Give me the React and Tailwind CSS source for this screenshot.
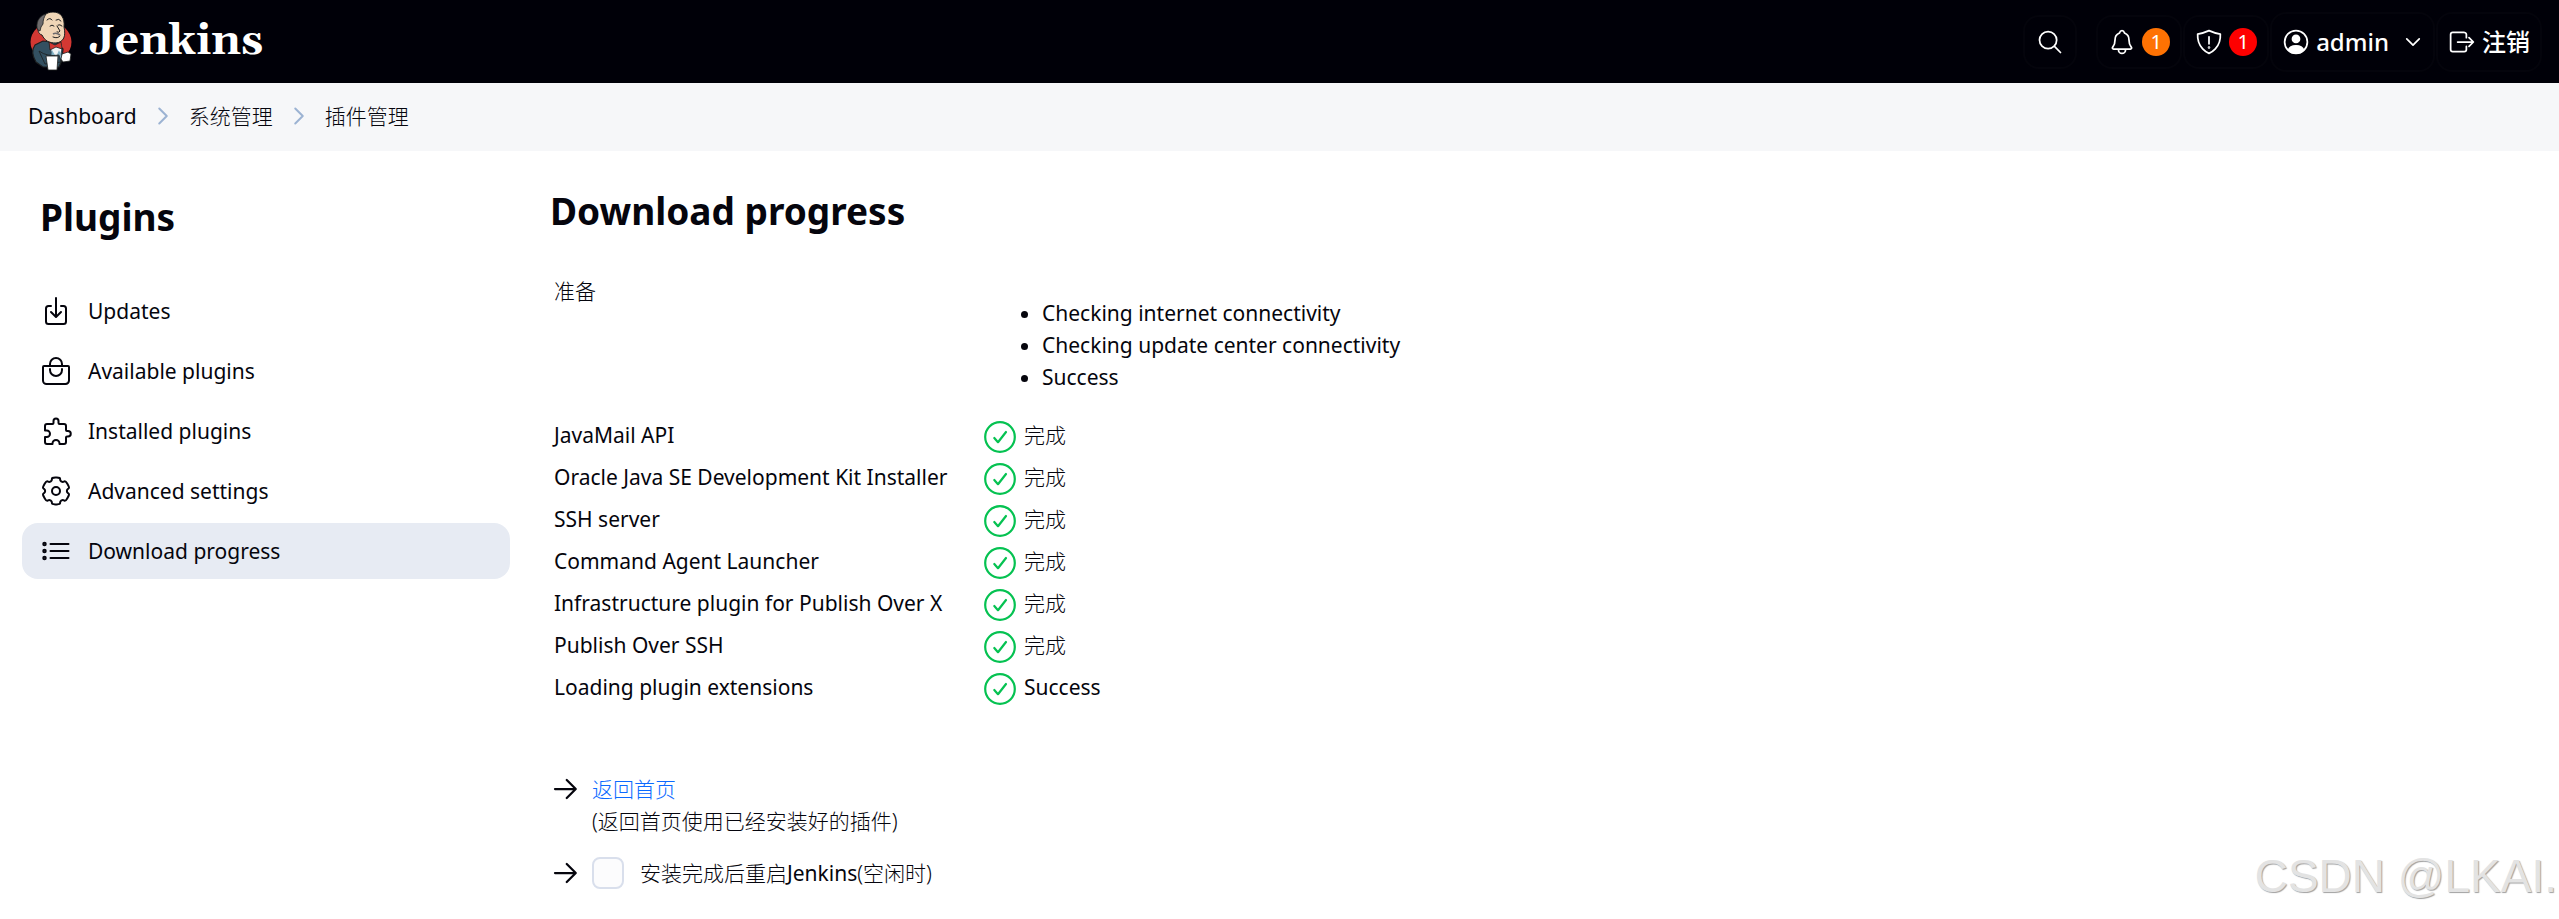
import React, { useState } from 'react';

const MENU = [
  { id: 'updates', label: 'Updates', icon: UpdatesIcon },
  { id: 'available', label: 'Available plugins', icon: BagIcon },
  { id: 'installed', label: 'Installed plugins', icon: PuzzleIcon },
  { id: 'advanced', label: 'Advanced settings', icon: GearIcon },
  { id: 'progress', label: 'Download progress', icon: ListIcon },
];

const JOBS = [
  { name: 'JavaMail API', status: '完成' },
  { name: 'Oracle Java SE Development Kit Installer', status: '完成' },
  { name: 'SSH server', status: '完成' },
  { name: 'Command Agent Launcher', status: '完成' },
  { name: 'Infrastructure plugin for Publish Over X', status: '完成' },
  { name: 'Publish Over SSH', status: '完成' },
  { name: 'Loading plugin extensions', status: 'Success' },
];

const CHECKS = ['Checking internet connectivity', 'Checking update center connectivity', 'Success'];

// Six rounded teeth: corner points joined by curves through their midpoints
function gearPath() {
  const points = [];
  for (let tooth = 0; tooth < 6; tooth++) {
    [[-17, 224], [17, 224], [22, 176], [38, 176]].forEach(([angle, radius]) => {
      const rad = ((tooth * 60 + angle - 90) * Math.PI) / 180;
      points.push([256 + radius * Math.cos(rad), 256 + radius * Math.sin(rad)]);
    });
  }
  const mid = (a, b, k) => `${(a[0] + (b[0] - a[0]) * k).toFixed(1)} ${(a[1] + (b[1] - a[1]) * k).toFixed(1)}`;
  return points
    .map((p, i) => {
      const prev = points[(i + points.length - 1) % points.length];
      const next = points[(i + 1) % points.length];
      return `${i === 0 ? 'M' : 'L'}${mid(p, prev, 0.4)}Q${p[0].toFixed(1)} ${p[1].toFixed(1)} ${mid(p, next, 0.4)}`;
    })
    .join('') + 'z';
}

const GEAR = gearPath();

// All line icons are drawn on the 512 ionicons grid
function Icon({ className = 'size-8', width = 32, children }) {
  return (
    <svg
      viewBox="0 0 512 512"
      className={`shrink-0 ${className}`}
      fill="none"
      stroke="currentColor"
      strokeWidth={width}
      strokeLinecap="round"
      strokeLinejoin="round"
      aria-hidden="true"
    >
      {children}
    </svg>
  );
}

function UpdatesIcon() {
  return (
    <Icon>
      <path d="M336 176h40a40 40 0 0140 40v208a40 40 0 01-40 40H136a40 40 0 01-40-40V216a40 40 0 0140-40h40" />
      <path d="M176 272l80 80 80-80M256 48v288" />
    </Icon>
  );
}

function BagIcon() {
  return (
    <Icon>
      <path d="M64 176a16 16 0 00-16 16v216c0 30.24 25.76 56 56 56h304c30.24 0 56-24.51 56-54.75V192a16 16 0 00-16-16zM160 176v-32a96 96 0 0196-96h0a96 96 0 0196 96v32" />
      <path d="M160 224v16a96 96 0 0096 96h0a96 96 0 0096-96v-16" />
    </Icon>
  );
}

function PuzzleIcon() {
  return (
    <Icon>
      <path d="M112 144h88a16 16 0 0016-16V96a40 40 0 0180 0v32a16 16 0 0016 16h72a32 32 0 0132 32v64a16 16 0 0016 16h16a44 44 0 010 88h-16a16 16 0 00-16 16v72a32 32 0 01-32 32h-72v-8a56 56 0 00-112 0v8h-88a32 32 0 01-32-32v-80h28a52 52 0 000-104H80v-72a32 32 0 0132-32z" />
    </Icon>
  );
}

function GearIcon() {
  return (
    <Icon>
      <path d={GEAR} />
      <circle cx="256" cy="256" r="64" />
    </Icon>
  );
}

function ListIcon() {
  return (
    <Icon>
      <path d="M168 144h288M168 256h288M168 368h288" />
      <circle cx="72" cy="144" r="20" />
      <circle cx="72" cy="256" r="20" />
      <circle cx="72" cy="368" r="20" />
    </Icon>
  );
}

function CheckIcon() {
  return (
    <svg viewBox="0 0 32 32" className="size-8 shrink-0" fill="none" stroke="#05c251" strokeLinecap="round" strokeLinejoin="round" aria-hidden="true">
      <circle cx="16" cy="16" r="14.8" strokeWidth="2.2" />
      <path d="M10.3 17l3.7 4.2 8-10.2" strokeWidth="2.2" />
    </svg>
  );
}

function ArrowIcon() {
  return (
    <Icon className="size-8" width={36}>
      <path d="M268 112l144 144-144 144M400 256H80" />
    </Icon>
  );
}

function Butler() {
  return (
    <svg viewBox="0 0 44 60" className="h-15 w-11 shrink-0" aria-hidden="true">
      <ellipse cx="22" cy="30" rx="20.5" ry="19" fill="#d33833" />
      <path d="M7 50Q1 40 6 33l8-4 14 2 6 6-1 11-3 7H14z" fill="#335061" stroke="#1d1f20" strokeWidth="1.2" />
      <path d="M21 33l12 0-2 12-6 3z" fill="#f0f4f5" />
      <path d="M23 38l4 7 3-7 3 7-5 5-6-5z" fill="#81b0c4" />
      <path d="M10 14C11 4 18 0 24 0c8 0 12 6 11 15 2 9 0 15-8 16-7 0-11-2-14-8-4-1-5-6-3-9z" fill="#f0d6b7" stroke="#1d1f20" strokeWidth="1" />
      <path d="M8 16C7 8 12 3 17 2c-2 3-3 6-3 10l-2 3-1 4-2-1z" fill="#6d6b6d" stroke="#1d1f20" strokeWidth=".8" />
      <path d="M18 8q3-3 5 0M27 8q3-2 5 1M21 14q2-2 4 0M29 13q2-1 4 1M28 14l3 5q-1 2-3 1M24 25q5 2 7-1" fill="none" stroke="#1d1f20" strokeWidth="1" strokeLinecap="round" />
      <path d="M24 22q3-2 7 1" fill="none" stroke="#6d6b6d" strokeWidth="1.6" />
      <path d="M20 30l6 3 6-3 1 7-6-2-6 3z" fill="#d33833" stroke="#1d1f20" strokeWidth=".8" />
      <path d="M10 39q8 6 20 4l2 7-16 2z" fill="#335061" stroke="#1d1f20" strokeWidth=".8" />
      <path d="M33 42l6-2 3 2-1 7-7 1-2-3z" fill="#fff" stroke="#1d1f20" strokeWidth=".8" />
      <path d="M17 44h12l-1 14H19z" fill="#fff" stroke="#1d1f20" strokeWidth=".8" />
    </svg>
  );
}

function Chevron() {
  return (
    <Icon className="size-5 text-[#9cb3d3]" width={52}>
      <path d="M160 64l192 192-192 192" />
    </Icon>
  );
}

function Header() {
  return (
    <header className="flex h-[83px] items-center justify-between bg-[#000008] pr-[17px] pl-[29px] text-white">
      <a href="#" className="flex items-center gap-4">
        <Butler />
        <span className="font-['Gelasio','DejaVu_Serif','Liberation_Serif',serif] text-[43px] leading-none font-bold">Jenkins</span>
      </a>
      <div className="flex items-center gap-px">
        <button type="button" aria-label="Search" className="mr-[18px] flex size-[54px] items-center justify-center rounded-2xl border-2 border-[#04040c]">
          <Icon className="size-7">
            <path d="M221 64a157 157 0 10157 157A157 157 0 00221 64zM338 338l110 110" />
          </Icon>
        </button>
        <a href="#" className="flex h-[54px] items-center gap-1.5 rounded-2xl border-2 border-[#04040c] px-2.5">
          <Icon className="size-7">
            <path d="M427.68 351.43C402 320 383.87 304 383.87 217.35 383.87 138 343.35 109.73 310 96c-4.43-1.82-8.6-6-9.95-10.55C294.2 65.54 277.8 48 256 48s-38.21 17.55-44 37.47c-1.35 4.6-5.52 8.71-9.95 10.53-33.39 13.75-73.87 41.92-73.87 121.35C128.13 304 110 320 84.32 351.43 73.68 364.45 83 384 101.61 384h308.88c18.51 0 27.77-19.61 17.19-32.57zM320 384v16a64 64 0 01-128 0v-16" />
          </Icon>
          <span className="flex size-7 items-center justify-center rounded-full bg-[#fe7203] text-xl">1</span>
        </a>
        <a href="#" className="flex h-[54px] items-center gap-1.5 rounded-2xl border-2 border-[#04040c] px-2.5">
          <Icon className="size-7">
            <path d="M463.1 112.37C373.68 96.33 336.71 84.45 256 48c-80.71 36.45-117.68 48.33-207.1 64.37C32.7 369.13 240.58 457.79 256 464c15.42-6.21 223.3-94.87 207.1-351.63zM256 160v130" />
            <circle cx="256" cy="356" r="8" />
          </Icon>
          <span className="flex size-7 items-center justify-center rounded-full bg-[#fe0000] text-xl">1</span>
        </a>
        <a href="#" className="flex h-[60px] items-center gap-1.5 rounded-2xl border-2 border-[#04040c] px-2.5 text-2xl font-medium">
          <Icon className="size-7">
            <circle cx="256" cy="256" r="208" />
            <circle cx="256" cy="200" r="64" fill="currentColor" stroke="currentColor" />
            <path d="M120 400c30-100 242-100 272 0-70 80-202 80-272 0z" fill="currentColor" />
          </Icon>
          admin
          <Icon className="ml-2 size-5" width={44}>
            <path d="M96 176l160 160 160-160" />
          </Icon>
        </a>
        <a href="#" className="flex h-[60px] items-center gap-1.5 rounded-2xl border-2 border-[#04040c] px-2.5 text-2xl font-medium">
          <Icon className="size-7">
            <path d="M336 336v56a40 40 0 01-40 40H88a40 40 0 01-40-40V120a40 40 0 0140-40h200c22.09 0 48 17.91 48 40v56M384 336l80-80-80-80M176 256h272" />
          </Icon>
          注销
        </a>
      </div>
    </header>
  );
}

function Breadcrumbs() {
  return (
    <nav className="flex h-[68px] items-center gap-4 bg-[#f6f7f9] px-7 pb-0.5" aria-label="Breadcrumb">
      <a href="#">Dashboard</a>
      <Chevron />
      <a href="#" className="font-light">系统管理</a>
      <Chevron />
      <a href="#" className="font-light">插件管理</a>
    </nav>
  );
}

function Sidebar() {
  return (
    <aside className="w-[488px] shrink-0">
      <h1 className="mb-[46px] px-[18px] pt-[46px] text-[37px] leading-10 font-bold">Plugins</h1>
      <nav className="flex flex-col gap-1">
        {MENU.map(({ id, label, icon: ItemIcon }) => (
          <a
            key={id}
            href={`#${id}`}
            className={`flex h-14 items-center gap-4 rounded-2xl px-[18px] ${id === 'progress' ? 'bg-[#e7ebf3]' : ''}`}
          >
            <ItemIcon />
            {label}
          </a>
        ))}
      </nav>
    </aside>
  );
}

function ProgressTable() {
  return (
    <table>
      <tbody>
        <tr className="align-top">
          <td className="w-[430px] py-1 font-light">准备</td>
          <td className="pt-[26px] pb-6">
            <ul className="list-disc pl-[58px]">
              {CHECKS.map((line) => (
                <li key={line}>{line}</li>
              ))}
            </ul>
          </td>
        </tr>
        {JOBS.map((job) => (
          <tr key={job.name} className="h-[42px] align-top">
            <td className="py-0.5">{job.name}</td>
            <td>
              <div className="flex items-center gap-2 pt-0.5">
                <CheckIcon />
                <span className={`pb-1 ${job.status === 'Success' ? '' : 'font-light'}`}>{job.status}</span>
              </div>
            </td>
          </tr>
        ))}
      </tbody>
    </table>
  );
}

export default function App() {
  const [restart, setRestart] = useState(false);

  return (
    <div className="relative min-h-screen overflow-hidden bg-white font-['Noto_Sans','Noto_Sans_CJK_SC',sans-serif] text-[21px] leading-8 text-[#05050d]">
      <Header />
      <Breadcrumbs />
      <div className="flex gap-10 px-[22px]">
        <Sidebar />
        <main className="min-w-0 grow pt-10">
          <h1 className="mb-10 text-[37px] leading-10 font-bold">Download progress</h1>
          <div className="px-1">
            <ProgressTable />
          </div>
          <div className="mt-[62px] flex gap-2.5">
            <ArrowIcon />
            <div className="font-light">
              <a href="#" className="text-[#0b6aff]">返回首页</a>
              <p>(返回首页使用已经安装好的插件)</p>
            </div>
          </div>
          <div className="mt-5 flex items-center gap-2.5">
            <ArrowIcon />
            <label className="flex items-center gap-4 font-light">
              <input
                type="checkbox"
                checked={restart}
                onChange={(e) => setRestart(e.target.checked)}
                className="size-8 appearance-none rounded-lg border-2 border-[#d9dfec] bg-[#fcfcfd] checked:bg-[#0b6aff]"
              />
              <span>安装完成后重启<span className="font-normal">Jenkins</span>(空闲时)</span>
            </label>
          </div>
        </main>
      </div>
      <div className="absolute right-0.5 bottom-5 font-['Liberation_Sans',sans-serif] text-[46px] leading-none text-[#e3e3e3] [text-shadow:1px_1px_1px_#a0a0a0]">CSDN @LKAI.</div>
    </div>
  );
}
